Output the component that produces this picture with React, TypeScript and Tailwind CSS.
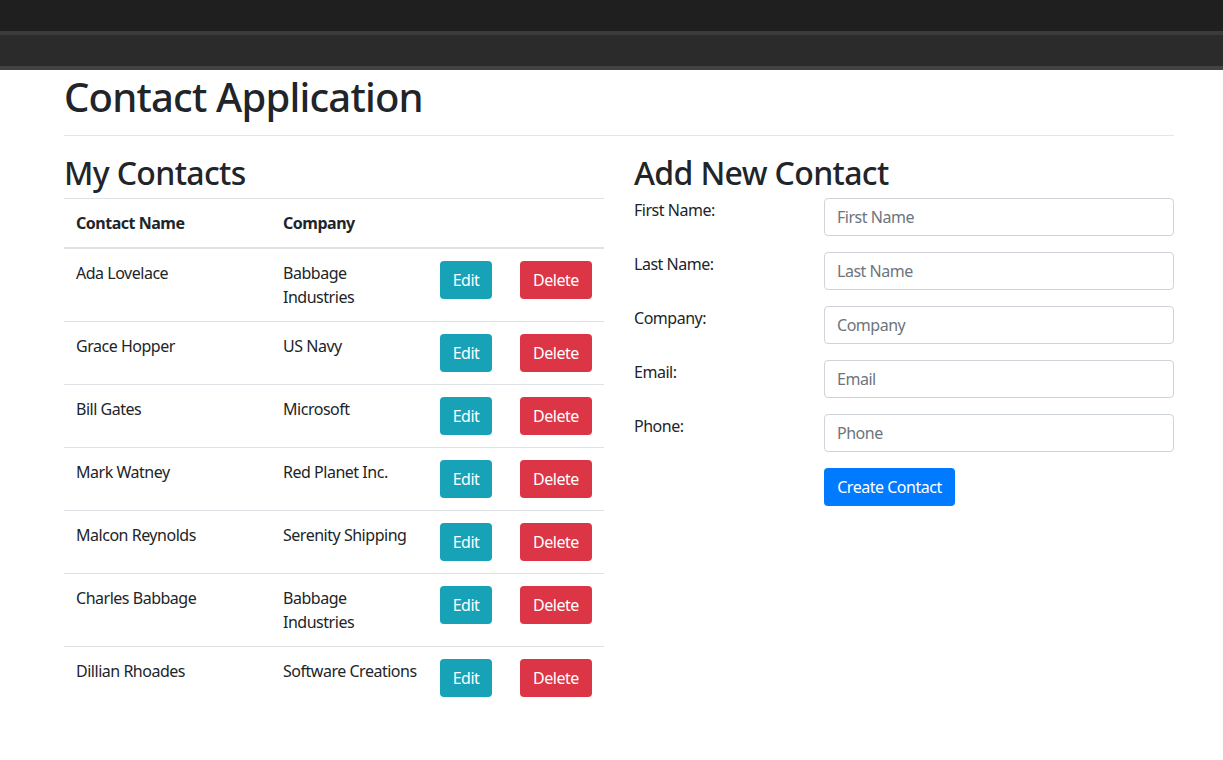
import React from "react";

const contacts = [
  { name: "Ada Lovelace", company: "Babbage Industries", nowrap: false },
  { name: "Grace Hopper", company: "US Navy", nowrap: false },
  { name: "Bill Gates", company: "Microsoft", nowrap: false },
  { name: "Mark Watney", company: "Red Planet Inc.", nowrap: false },
  { name: "Malcon Reynolds", company: "Serenity Shipping", nowrap: false },
  { name: "Charles Babbage", company: "Babbage Industries", nowrap: false },
  { name: "Dillian Rhoades", company: "Software Creations", nowrap: true },
];

const fields = ["First Name", "Last Name", "Company", "Email", "Phone"];

export default function App() {
  return (
    <div className="min-h-[760px] bg-white text-[#212529] font-['Noto_Sans','Open_Sans',sans-serif] text-[16px] leading-[24px] tracking-[-0.03em]">
      <div className="h-[31px] bg-[#1f1f1f]" />
      <div className="h-[4px] bg-[#3b3b3b]" />
      <div className="h-[31px] bg-[#2b2b2b]" />
      <div className="h-[4px] bg-[#434343]" />
      <div className="ml-[64px] w-[1110px]">
        <h1 className="pt-[3px] text-[40px] leading-[48px] font-medium tracking-[-0.02em]">Contact Application</h1>
        <hr className="mt-[14px] mb-[16px] border-0 border-t border-[#e5e5e5]" />
        <div className="flex gap-[30px]">
          <div className="w-[540px]">
            <h2 className="pt-[2px] text-[32px] leading-[38px] font-medium mb-[6px] tracking-[-0.02em]">My Contacts</h2>
            <table className="w-[540px] table-fixed border-collapse">
              <colgroup>
                <col className="w-[207px]" />
                <col className="w-[157px]" />
                <col className="w-[80px]" />
                <col className="w-[96px]" />
              </colgroup>
              <thead>
                <tr className="border-t border-b-2 border-[#dee2e6]">
                  <th className="p-[12px] text-left font-bold align-bottom">Contact Name</th>
                  <th className="p-[12px] text-left font-bold align-bottom">Company</th>
                  <th className="p-[12px]" />
                  <th className="p-[12px]" />
                </tr>
              </thead>
              <tbody>
                {contacts.map((c) => (
                  <tr key={c.name} className="border-t border-[#dee2e6]">
                    <td className="p-[12px] align-top">{c.name}</td>
                    <td className={c.nowrap ? "p-[12px] align-top whitespace-nowrap" : "p-[12px] align-top"}>{c.company}</td>
                    <td className="p-[12px] align-top">
                      <button className="h-[38px] w-[52px] rounded-[4px] bg-[#17a2b8] text-white">Edit</button>
                    </td>
                    <td className="p-[12px] align-top">
                      <button className="h-[38px] w-[72px] rounded-[4px] bg-[#dc3545] text-white">Delete</button>
                    </td>
                  </tr>
                ))}
              </tbody>
            </table>
          </div>
          <div className="w-[540px]">
            <h2 className="pt-[2px] text-[32px] leading-[38px] font-medium mb-[6px] tracking-[-0.02em]">Add New Contact</h2>
            <div className="flex flex-col gap-[16px]">
              {fields.map((f) => (
                <div key={f} className="flex">
                  <label className="w-[190px] leading-[24px]">{f}:</label>
                  <input
                    placeholder={f}
                    className="w-[350px] h-[38px] px-[12px] border border-[#ced4da] rounded-[4px] placeholder:text-[#6c757d] outline-none tracking-[-0.03em]"
                  />
                </div>
              ))}
              <div className="flex">
                <div className="w-[190px]" />
                <button className="h-[38px] w-[131px] rounded-[4px] bg-[#007bff] text-white">Create Contact</button>
              </div>
            </div>
          </div>
        </div>
      </div>
    </div>
  );
}
